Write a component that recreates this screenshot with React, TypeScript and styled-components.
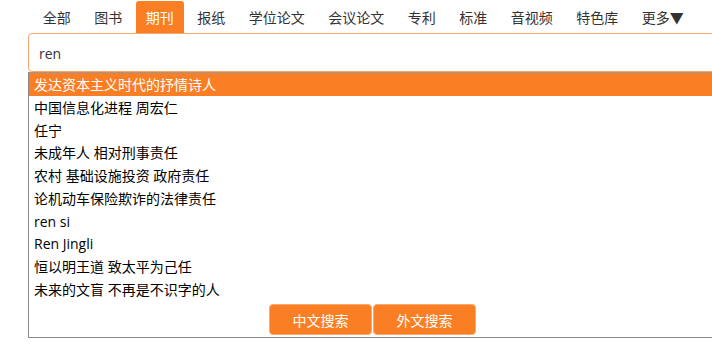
import styled, { createGlobalStyle } from 'styled-components';

const ORANGE = '#fa7f24';

const tabs = ['全部', '图书', '期刊', '报纸', '学位论文', '会议论文', '专利', '标准', '音视频', '特色库', '更多▼'];

const suggestions = [
  '发达资本主义时代的抒情诗人',
  '中国信息化进程 周宏仁',
  '任宁',
  '未成年人 相对刑事责任',
  '农村 基础设施投资 政府责任',
  '论机动车保险欺诈的法律责任',
  'ren si',
  'Ren Jingli',
  '恒以明王道 致太平为己任',
  '未来的文盲 不再是不识字的人',
];

const GlobalStyle = createGlobalStyle`
  html, body {
    margin: 0;
    padding: 0;
    background: #fff;
    overflow: hidden;
  }
  body {
    font-family: "Open Sans", "Noto Sans CJK SC", sans-serif;
    font-size: 14px;
  }
`;

function App() {
  return (
    <>
      <GlobalStyle />
      <Wrapper>
        <TabBar>
          {tabs.map(t => (
            <Tab key={t} active={t === '期刊'}>{t}</Tab>
          ))}
        </TabBar>
        <SearchBox>
          <SearchText>ren</SearchText>
        </SearchBox>
        <Dropdown>
          {suggestions.map((s, i) => (
            <Suggestion key={s} active={i === 0}>{s}</Suggestion>
          ))}
          <ButtonRow>
            <SearchButton>中文搜索</SearchButton>
            <SearchButton>外文搜索</SearchButton>
          </ButtonRow>
        </Dropdown>
      </Wrapper>
    </>
  );
}

const Wrapper = styled.div`
  width: 689px;
  margin-left: 28px;
  display: flex;
  flex-direction: column;
`;

const TabBar = styled.div`
  display: flex;
  gap: 4px;
  padding: 1px 0 0 5px;
  height: 32px;
`;

const Tab = styled.div<{ active: boolean }>`
  padding: 0 9.75px;
  height: 32px;
  line-height: 33px;
  font-family: "Noto Sans CJK SC", sans-serif;
  font-size: 14px;
  color: ${p => (p.active ? '#fff' : '#333')};
  background: ${p => (p.active ? ORANGE : 'transparent')};
  border-radius: 3px 3px 0 0;
  white-space: nowrap;
`;

const SearchBox = styled.div`
  height: 37px;
  border: 1px solid #f6a56c;
  border-radius: 4px;
  display: flex;
  align-items: center;
  padding-left: 10px;
`;

const SearchText = styled.span`
  font-family: "Open Sans", sans-serif;
  font-size: 14px;
  color: #333;
  margin-top: 2px;
`;

const Dropdown = styled.div`
  border: 1px solid #8a8a8a;
  border-top-color: #999;
  display: flex;
  flex-direction: column;
  height: 264px;
`;

const Suggestion = styled.div<{ active: boolean }>`
  height: 22.75px;
  line-height: 24px;
  padding-left: 5px;
  font-family: "Open Sans", "Noto Sans CJK SC", sans-serif;
  font-size: 14px;
  color: ${p => (p.active ? '#fff' : '#000')};
  background: ${p => (p.active ? ORANGE : 'transparent')};
  white-space: nowrap;
`;

const ButtonRow = styled.div`
  display: flex;
  justify-content: center;
  gap: 1px;
  margin-top: 3px;
`;

const SearchButton = styled.div`
  width: 101px;
  height: 29px;
  line-height: 30px;
  text-align: center;
  background: ${ORANGE};
  border: 1px solid #fba86e;
  border-radius: 4px;
  color: #fff;
  font-family: "Noto Sans CJK SC", sans-serif;
  font-size: 14px;
`;

export default App;
